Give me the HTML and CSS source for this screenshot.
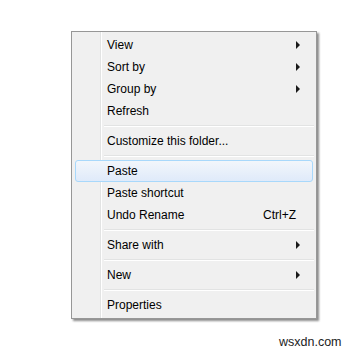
FILE: index.html
```html
<!DOCTYPE html>
<html>
<head>
<meta charset="utf-8">
<link rel="stylesheet" href="styles.css">
</head>
<body>
<div class="menu">
  <div class="item"><span class="label">View</span><span class="arrow"></span></div>
  <div class="item"><span class="label">Sort by</span><span class="arrow"></span></div>
  <div class="item"><span class="label">Group by</span><span class="arrow"></span></div>
  <div class="item"><span class="label">Refresh</span></div>
  <div class="sep"></div>
  <div class="item"><span class="label">Customize this folder...</span></div>
  <div class="sep"></div>
  <div class="item hover"><span class="label">Paste</span></div>
  <div class="item"><span class="label">Paste shortcut</span></div>
  <div class="item"><span class="label">Undo Rename</span><span class="key">Ctrl+Z</span></div>
  <div class="sep"></div>
  <div class="item"><span class="label">Share with</span><span class="arrow"></span></div>
  <div class="sep"></div>
  <div class="item"><span class="label">New</span><span class="arrow"></span></div>
  <div class="sep"></div>
  <div class="item"><span class="label">Properties</span></div>
</div>
<div class="watermark">wsxdn.com</div>
</body>
</html>
```
FILE: styles.css
```css
html, body {
  margin: 0;
  padding: 0;
  background: #ffffff;
}
body {
  padding: 31px 0 0 71px;
  height: 354px;
  box-sizing: border-box;
  position: relative;
  font-family: "Liberation Sans", Arial, sans-serif;
  font-size: 12px;
  color: #000;
}
.menu {
  width: 246px;
  box-sizing: border-box;
  border: 1px solid #979797;
  background: #f0f0f0;
  padding: 2px;
  box-shadow: 2px 2px 2px rgba(0, 0, 0, 0.45);
  background-image: linear-gradient(to right, transparent 28px, #e2e3e3 28px, #e2e3e3 29px, #ffffff 29px, #ffffff 30px, transparent 30px);
  background-clip: padding-box;
}
.item {
  height: 22px;
  display: flex;
  align-items: center;
  padding: 0 11px 0 31px;
  box-sizing: border-box;
  border: 1px solid transparent;
  border-radius: 3px;
  margin: 0 1px;
}
.item.hover {
  border-color: #a8d8fb;
  background: linear-gradient(to bottom, #f2f6fb, #dfeafa);
}
.label {
  flex: 1;
  white-space: nowrap;
}
.key {
  margin-right: 5px;
}
.arrow {
  width: 0;
  height: 0;
  border-top: 4px solid transparent;
  border-bottom: 4px solid transparent;
  border-left: 4px solid #1a1a1a;
  margin-right: 1px;
}
.sep {
  height: 8px;
  display: flex;
  align-items: center;
  padding-left: 30px;
}
.sep::before {
  content: "";
  display: block;
  flex: 1;
  border-top: 1px solid #e2e3e3;
  border-bottom: 1px solid #ffffff;
  height: 0;
}
.watermark {
  position: absolute;
  left: 279px;
  top: 335px;
  font-family: "Liberation Sans", Arial, sans-serif;
  font-size: 12.5px;
  color: #222;
}
```
